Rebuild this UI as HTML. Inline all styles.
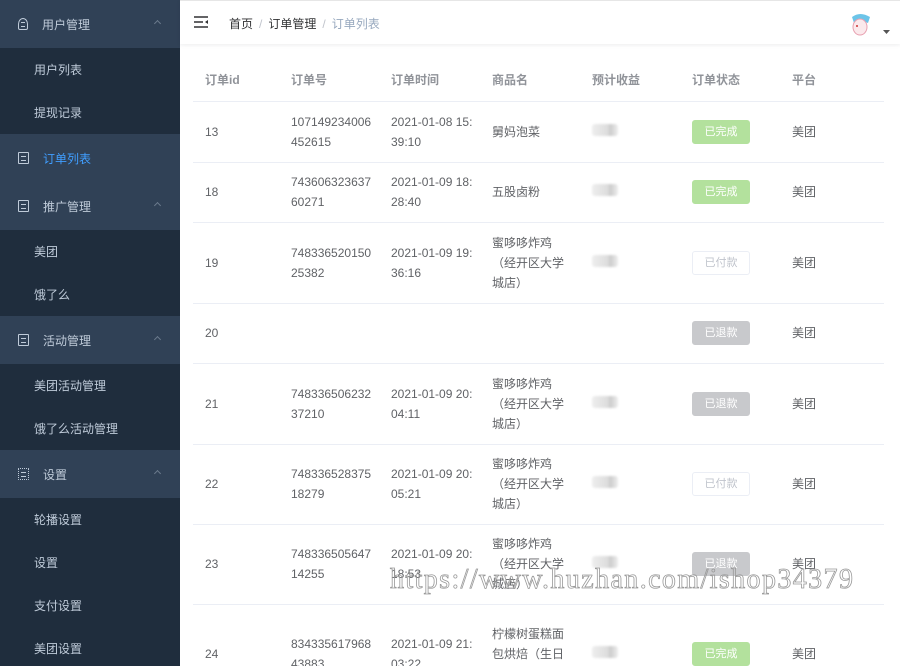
<!DOCTYPE html>
<html><head><meta charset="utf-8"><style>
*{margin:0;padding:0;box-sizing:border-box}
html,body{width:900px;height:666px;overflow:hidden}
body{font-family:"Liberation Sans","Noto Sans CJK SC",sans-serif;font-size:12px;background:#fff;position:relative}
.side{position:absolute;left:0;top:0;width:180px;height:666px;background:#1f2d3d;overflow:hidden}
.m{height:48px;background:#304156;color:#bfcbd9;display:flex;align-items:center;padding-left:18px;position:relative;font-size:12px}
.m .ic{width:11px;height:12px;border:1.3px solid #bfcbd9;border-radius:1px;margin-right:14px;position:relative}
.m .ic:after{content:"";position:absolute;left:2px;right:2px;top:3px;height:3px;border-top:1px solid #bfcbd9;border-bottom:1px solid #bfcbd9}
.m .ar{position:absolute;right:20px;top:21px;width:5px;height:5px;border-left:1px solid #6b7a8c;border-top:1px solid #6b7a8c;transform:rotate(45deg)}
.s{height:43px;color:#bfcbd9;display:flex;align-items:center;padding-left:34px}
.act{color:#409eff}
.hdr{position:absolute;left:180px;top:0;width:720px;height:44px;box-shadow:0 1px 4px rgba(0,21,41,.08);border-top:1px solid #e6e6e6}
.bc{position:absolute;left:49px;top:14px;font-size:12px;color:#303133}
.bc span{color:#c0c4cc;margin:0 6px}
.bc i{font-style:normal;color:#97a8be}
.wrap{position:absolute;left:193px;top:59px;width:691px;height:607px;overflow:hidden}
table{width:691px;border-collapse:collapse;color:#606266;font-size:12px}
th{text-align:left;color:#909399;font-weight:bold;height:42px;border-bottom:1px solid #ebeef5;padding-left:12px}
td{border-bottom:1px solid #ebeef5;padding:0 0 0 12px;line-height:20px;vertical-align:middle}
.tag{display:inline-block;width:58px;height:24px;line-height:22px;text-align:center;border-radius:3px;color:#fff;font-size:11px}
.g{background:#b3e19d;border:1px solid #b3e19d}
.r{background:#c8c9cc;border:1px solid #c8c9cc}
.o{background:#fff;border:1px solid #ebeef5;color:#c0c4cc}
.bl{display:inline-block;width:26px;height:12px;background:linear-gradient(90deg,#eee,#ddd 60%,#ccc 70%,#eee);border-radius:3px;filter:blur(1px)}
.wm{position:absolute;left:390px;top:564px;font-family:"Liberation Serif",serif;font-size:28px;color:transparent;-webkit-text-stroke:0.8px #999;letter-spacing:1.4px;white-space:nowrap}
</style></head><body>
<div class="side">
<div class="m"><span class="ic" style="border-radius:50% 50% 2px 2px;border-width:1.2px;width:10px"></span>用户管理<span class="ar"></span></div>
<div class="s">用户列表</div><div class="s">提现记录</div>
<div class="m act"><span class="ic"></span>订单列表</div>
<div class="m"><span class="ic"></span>推广管理<span class="ar"></span></div>
<div class="s">美团</div><div class="s">饿了么</div>
<div class="m"><span class="ic"></span>活动管理<span class="ar"></span></div>
<div class="s">美团活动管理</div><div class="s">饿了么活动管理</div>
<div class="m"><span class="ic" style="border-style:dotted"></span>设置<span class="ar"></span></div>
<div class="s">轮播设置</div><div class="s">设置</div><div class="s">支付设置</div><div class="s">美团设置</div>
</div>
<div class="hdr">
<svg style="position:absolute;left:14px;top:15px" width="14" height="12"><path d="M0 1h14M0 6h9M0 11h14" stroke="#303133" stroke-width="1.6"/><path d="M14 4l-3 2 3 2z" fill="#303133"/></svg>
<div class="bc">首页<span>/</span>订单管理<span>/</span><i>订单列表</i></div>
<svg style="position:absolute;left:668px;top:10px" width="24" height="26"><path d="M4 6q8-6 18 0l-2 6q-6-3-14 0z" fill="#6cc4e8"/><ellipse cx="12" cy="16" rx="7" ry="8" fill="#fbe9ec" stroke="#e8a0b0"/><circle cx="9" cy="15" r="1" fill="#c33"/></svg>
<svg style="position:absolute;left:703px;top:29px" width="7" height="4"><path d="M0 0h7l-3.5 4z" fill="#555"/></svg>
</div>
<div class="wrap"><table>
<tr><th style="width:86px">订单id</th><th style="width:100px">订单号</th><th style="width:101px">订单时间</th><th style="width:100px">商品名</th><th style="width:100px">预计收益</th><th style="width:100px">订单状态</th><th>平台</th></tr>
<tr style="height:61px"><td>13</td><td>107149234006<br>452615</td><td>2021-01-08 15:<br>39:10</td><td>舅妈泡菜</td><td><span class="bl"></span></td><td><span class="tag g">已完成</span></td><td>美团</td></tr>
<tr style="height:60px"><td>18</td><td>743606323637<br>60271</td><td>2021-01-09 18:<br>28:40</td><td>五股卤粉</td><td><span class="bl"></span></td><td><span class="tag g">已完成</span></td><td>美团</td></tr>
<tr style="height:81px"><td>19</td><td>748336520150<br>25382</td><td>2021-01-09 19:<br>36:16</td><td>蜜哆哆炸鸡<br>（经开区大学<br>城店）</td><td><span class="bl"></span></td><td><span class="tag o">已付款</span></td><td>美团</td></tr>
<tr style="height:60px"><td>20</td><td></td><td></td><td></td><td></td><td><span class="tag r">已退款</span></td><td>美团</td></tr>
<tr style="height:81px"><td>21</td><td>748336506232<br>37210</td><td>2021-01-09 20:<br>04:11</td><td>蜜哆哆炸鸡<br>（经开区大学<br>城店）</td><td><span class="bl"></span></td><td><span class="tag r">已退款</span></td><td>美团</td></tr>
<tr style="height:80px"><td>22</td><td>748336528375<br>18279</td><td>2021-01-09 20:<br>05:21</td><td>蜜哆哆炸鸡<br>（经开区大学<br>城店）</td><td><span class="bl"></span></td><td><span class="tag o">已付款</span></td><td>美团</td></tr>
<tr style="height:80px"><td>23</td><td>748336505647<br>14255</td><td>2021-01-09 20:<br>18:53</td><td>蜜哆哆炸鸡<br>（经开区大学<br>城店）</td><td><span class="bl"></span></td><td><span class="tag r">已退款</span></td><td>美团</td></tr>
<tr style="height:100px"><td>24</td><td>834335617968<br>43883</td><td>2021-01-09 21:<br>03:22</td><td>柠檬树蛋糕面<br>包烘焙（生日<br>蛋糕、小面</td><td><span class="bl"></span></td><td><span class="tag g">已完成</span></td><td>美团</td></tr>
</table></div>
<div class="wm">https://www.huzhan.com/ishop34379</div>
</body></html>
